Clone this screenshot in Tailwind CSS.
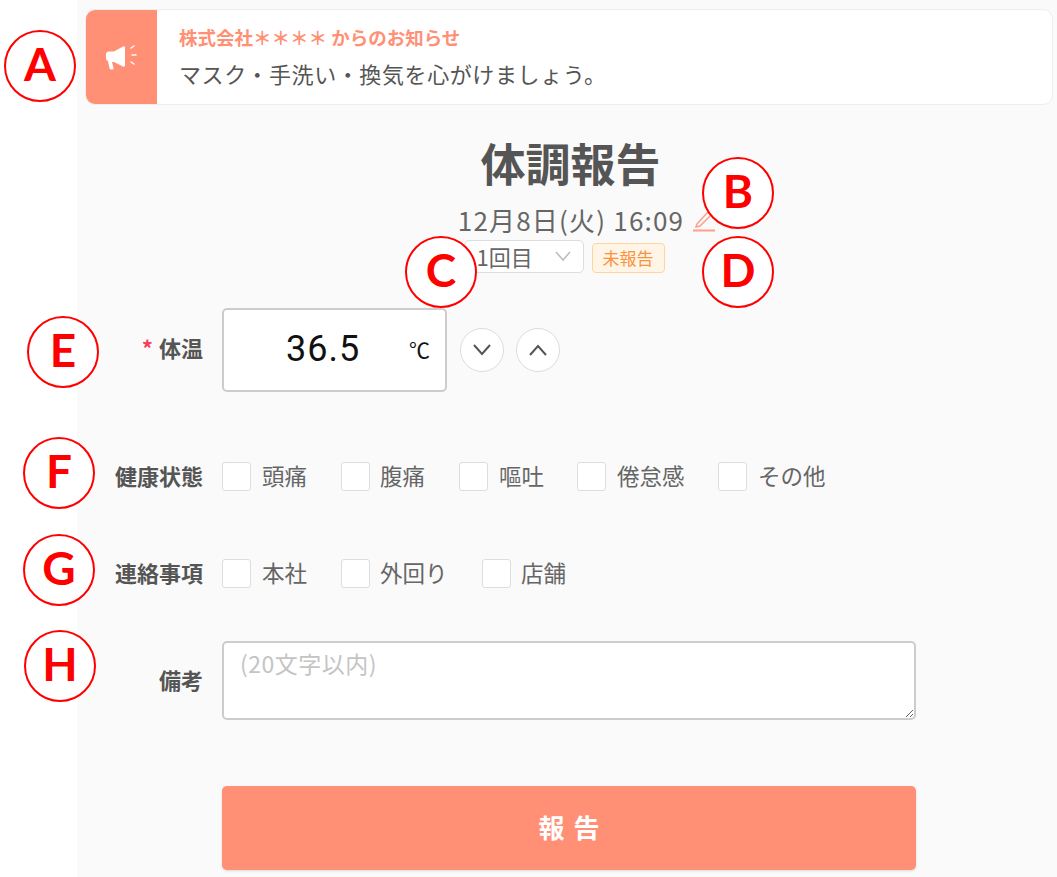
<!DOCTYPE html>
<html lang="ja">
<head>
<meta charset="UTF-8">
<title>体調報告</title>
<script src="https://cdn.jsdelivr.net/npm/@tailwindcss/browser@4"></script>
</head>
<body class="bg-white font-['Noto_Sans_CJK_JP','Noto_Sans',sans-serif] text-[#555]">
<div class="relative h-[877px] w-[1057px] overflow-hidden">
  <main class="ml-[77px] h-full bg-[#fafafa] pl-[8px] pr-[4px] pt-[9px]">
    <!-- notice -->
    <div class="flex h-[96px] overflow-hidden rounded-[10px] border border-[#eee] bg-white">
      <div class="flex w-[71px] items-center justify-center bg-[#ff9076]">
        <svg width="34" height="26" viewBox="0 0 34 26" fill="none">
          <path d="M1 10.500c0-2 1.300-3 3-3h5l9-5c1-.5 2 0 2 1v18c0 1-1 1.500-2 1l-9-4.500H7l1.500 6c.2 1-.3 1.500-1 1.500H6c-.7 0-1.200-.4-1.400-1L3 17c-1.300-.3-2-1.500-2-3z" fill="#fff"/>
          <path d="M26 4l3-2M27 11h4M26 18l3 2" stroke="#fff" stroke-width="1.500" stroke-linecap="round"/>
        </svg>
      </div>
      <div class="pl-[22px] pt-[14px]">
        <p class="text-[18.500px] leading-[26px] font-bold text-[#ff9076]">株式会社＊＊＊＊ からのお知らせ</p>
        <p class="mt-[8px] text-[22px] leading-[30px] tracking-[0.6px] text-[#555]">マスク・手洗い・換気を心がけましょう。</p>
      </div>
    </div>

    <!-- heading -->
    <div class="mt-[28px] flex flex-col items-center pl-[3px]">
      <h1 class="text-[45px] leading-[60px] font-bold text-[#555]">体調報告</h1>
      <div class="mt-[9px] flex items-center pl-[33px] text-[26px] leading-[36px] tracking-[1.200px] text-[#666]">
        <span>12月8日(火) 16:09</span>
        <svg class="ml-[8px]" width="24" height="24" viewBox="0 0 24 24" fill="none" stroke="#ff9f8a" stroke-width="1.500">
          <path d="M5 16L15 5c1-1 2-1 3 0s1 2 0 3L8 18l-4 1z"/>
          <path d="M1 22.500h22" stroke-width="2"/>
        </svg>
      </div>
      <div class="mt-[2px] flex items-start pr-[13px]">
        <div class="flex h-[33px] w-[120px] items-center rounded-[5px] border border-[#ddd] bg-white pb-[1px] pl-[12px] text-[22px] text-[#666]">
          <span>1回目</span>
          <svg class="ml-[21px]" width="18" height="12" viewBox="0 0 18 12" fill="none" stroke="#bbb" stroke-width="1.500"><path d="M2 2l7 8 7-8"/></svg>
        </div>
        <span class="mt-[3px] ml-[8px] flex h-[30px] w-[73px] items-center justify-center rounded-[4px] border border-[#ffd59e] bg-[#fff5e6] text-[17px] text-[#fb923c]">未報告</span>
      </div>
    </div>

    <!-- form -->
    <form class="mt-[35px] flex flex-col">
      <div class="flex h-[84px] items-center">
        <label class="mb-[5px] w-[118px] text-right text-[22px] font-bold text-[#555]"><span class="mr-[6px] text-[#f43f5e]">*</span>体温</label>
        <div class="ml-[19px] flex h-[84px] w-[225px] items-center rounded-[5px] border-2 border-[#ccc] bg-white">
          <span class="mb-[3px] ml-[62px] font-['Roboto',sans-serif] text-[36px] tracking-[1px] text-[#111]">36.5</span>
          <span class="mr-[15px] ml-auto text-[21px] text-[#111]">℃</span>
        </div>
        <button type="button" class="ml-[13px] flex h-[44px] w-[44px] items-center justify-center rounded-full border border-[#ddd] bg-white">
          <svg width="20" height="14" viewBox="0 0 20 14" fill="none" stroke="#555" stroke-width="2"><path d="M2 2l8 9 8-9"/></svg>
        </button>
        <button type="button" class="ml-[12px] flex h-[44px] w-[44px] items-center justify-center rounded-full border border-[#ddd] bg-white">
          <svg width="20" height="14" viewBox="0 0 20 14" fill="none" stroke="#555" stroke-width="2"><path d="M2 12l8-9 8 9"/></svg>
        </button>
      </div>

      <div class="mt-[70px] flex h-[29px] items-center">
        <span class="mb-[3px] w-[118px] text-right text-[22px] font-bold text-[#555]">健康状態</span>
        <div class="ml-[19px] flex items-center text-[22.500px] text-[#666]">
          <label class="flex w-[119px] items-center gap-[11px]"><span class="h-[29px] w-[29px] rounded-[3px] border border-[#ddd] bg-white"></span><span class="mb-[2px]">頭痛</span></label>
          <label class="flex w-[118px] items-center gap-[10px]"><span class="h-[29px] w-[29px] rounded-[3px] border border-[#ddd] bg-white"></span><span class="mb-[2px]">腹痛</span></label>
          <label class="flex w-[118px] items-center gap-[11px]"><span class="h-[29px] w-[29px] rounded-[3px] border border-[#ddd] bg-white"></span><span class="mb-[2px]">嘔吐</span></label>
          <label class="flex w-[141px] items-center gap-[11px]"><span class="h-[29px] w-[29px] rounded-[3px] border border-[#ddd] bg-white"></span><span class="mb-[2px]">倦怠感</span></label>
          <label class="flex items-center gap-[11px]"><span class="h-[29px] w-[29px] rounded-[3px] border border-[#ddd] bg-white"></span><span class="mb-[2px]">その他</span></label>
        </div>
      </div>

      <div class="mt-[68px] flex h-[29px] items-center">
        <span class="mb-[3px] w-[118px] text-right text-[22px] font-bold text-[#555]">連絡事項</span>
        <div class="ml-[19px] flex items-center text-[22.500px] text-[#666]">
          <label class="flex w-[119px] items-center gap-[11px]"><span class="h-[29px] w-[29px] rounded-[3px] border border-[#ddd] bg-white"></span><span class="mb-[2px]">本社</span></label>
          <label class="flex w-[141px] items-center gap-[10px]"><span class="h-[29px] w-[29px] rounded-[3px] border border-[#ddd] bg-white"></span><span class="mb-[2px]">外回り</span></label>
          <label class="flex items-center gap-[10px]"><span class="h-[29px] w-[29px] rounded-[3px] border border-[#ddd] bg-white"></span><span class="mb-[2px]">店舗</span></label>
        </div>
      </div>

      <div class="mt-[53px] flex items-center">
        <label class="mb-[2px] w-[118px] text-right text-[22px] font-bold text-[#555]">備考</label>
        <textarea class="ml-[19px] h-[79px] w-[694px] rounded-[5px] border-2 border-[#ccc] bg-white px-[16px] py-[5px] text-[23px] leading-[30px] tracking-[0.5px] placeholder:text-[#c4c4c4]" placeholder="(20文字以内)"></textarea>
      </div>

      <button type="button" class="mt-[66px] ml-[137px] h-[84px] w-[694px] rounded-[5px] bg-[#ff9076] pb-[4px] pl-[9px] text-[26px] font-bold tracking-[9px] text-white shadow-sm">報告</button>
    </form>
  </main>

  <!-- callout markers on the screenshot -->
  <span class="absolute top-[30px] left-[4px] flex h-[72px] w-[72px] items-center justify-center rounded-full border-2 border-[#f00] bg-white pb-[5px] font-['Lato',sans-serif] text-[46px] font-bold text-[#f00]">A</span>
  <span class="absolute top-[157px] left-[702px] flex h-[72px] w-[72px] items-center justify-center rounded-full border-2 border-[#f00] bg-white pb-[5px] font-['Lato',sans-serif] text-[46px] font-bold text-[#f00]">B</span>
  <span class="absolute top-[236px] left-[405px] flex h-[72px] w-[72px] items-center justify-center rounded-full border-2 border-[#f00] bg-white pb-[5px] font-['Lato',sans-serif] text-[46px] font-bold text-[#f00]">C</span>
  <span class="absolute top-[236px] left-[702px] flex h-[72px] w-[72px] items-center justify-center rounded-full border-2 border-[#f00] bg-white pb-[5px] font-['Lato',sans-serif] text-[46px] font-bold text-[#f00]">D</span>
  <span class="absolute top-[316px] left-[27px] flex h-[72px] w-[72px] items-center justify-center rounded-full border-2 border-[#f00] bg-white pb-[5px] font-['Lato',sans-serif] text-[46px] font-bold text-[#f00]">E</span>
  <span class="absolute top-[437px] left-[23px] flex h-[72px] w-[72px] items-center justify-center rounded-full border-2 border-[#f00] bg-white pb-[5px] font-['Lato',sans-serif] text-[46px] font-bold text-[#f00]">F</span>
  <span class="absolute top-[534px] left-[23px] flex h-[72px] w-[72px] items-center justify-center rounded-full border-2 border-[#f00] bg-white pb-[5px] font-['Lato',sans-serif] text-[46px] font-bold text-[#f00]">G</span>
  <span class="absolute top-[630px] left-[24px] flex h-[72px] w-[72px] items-center justify-center rounded-full border-2 border-[#f00] bg-white pb-[5px] font-['Lato',sans-serif] text-[46px] font-bold text-[#f00]">H</span>
</div>
</body>
</html>
